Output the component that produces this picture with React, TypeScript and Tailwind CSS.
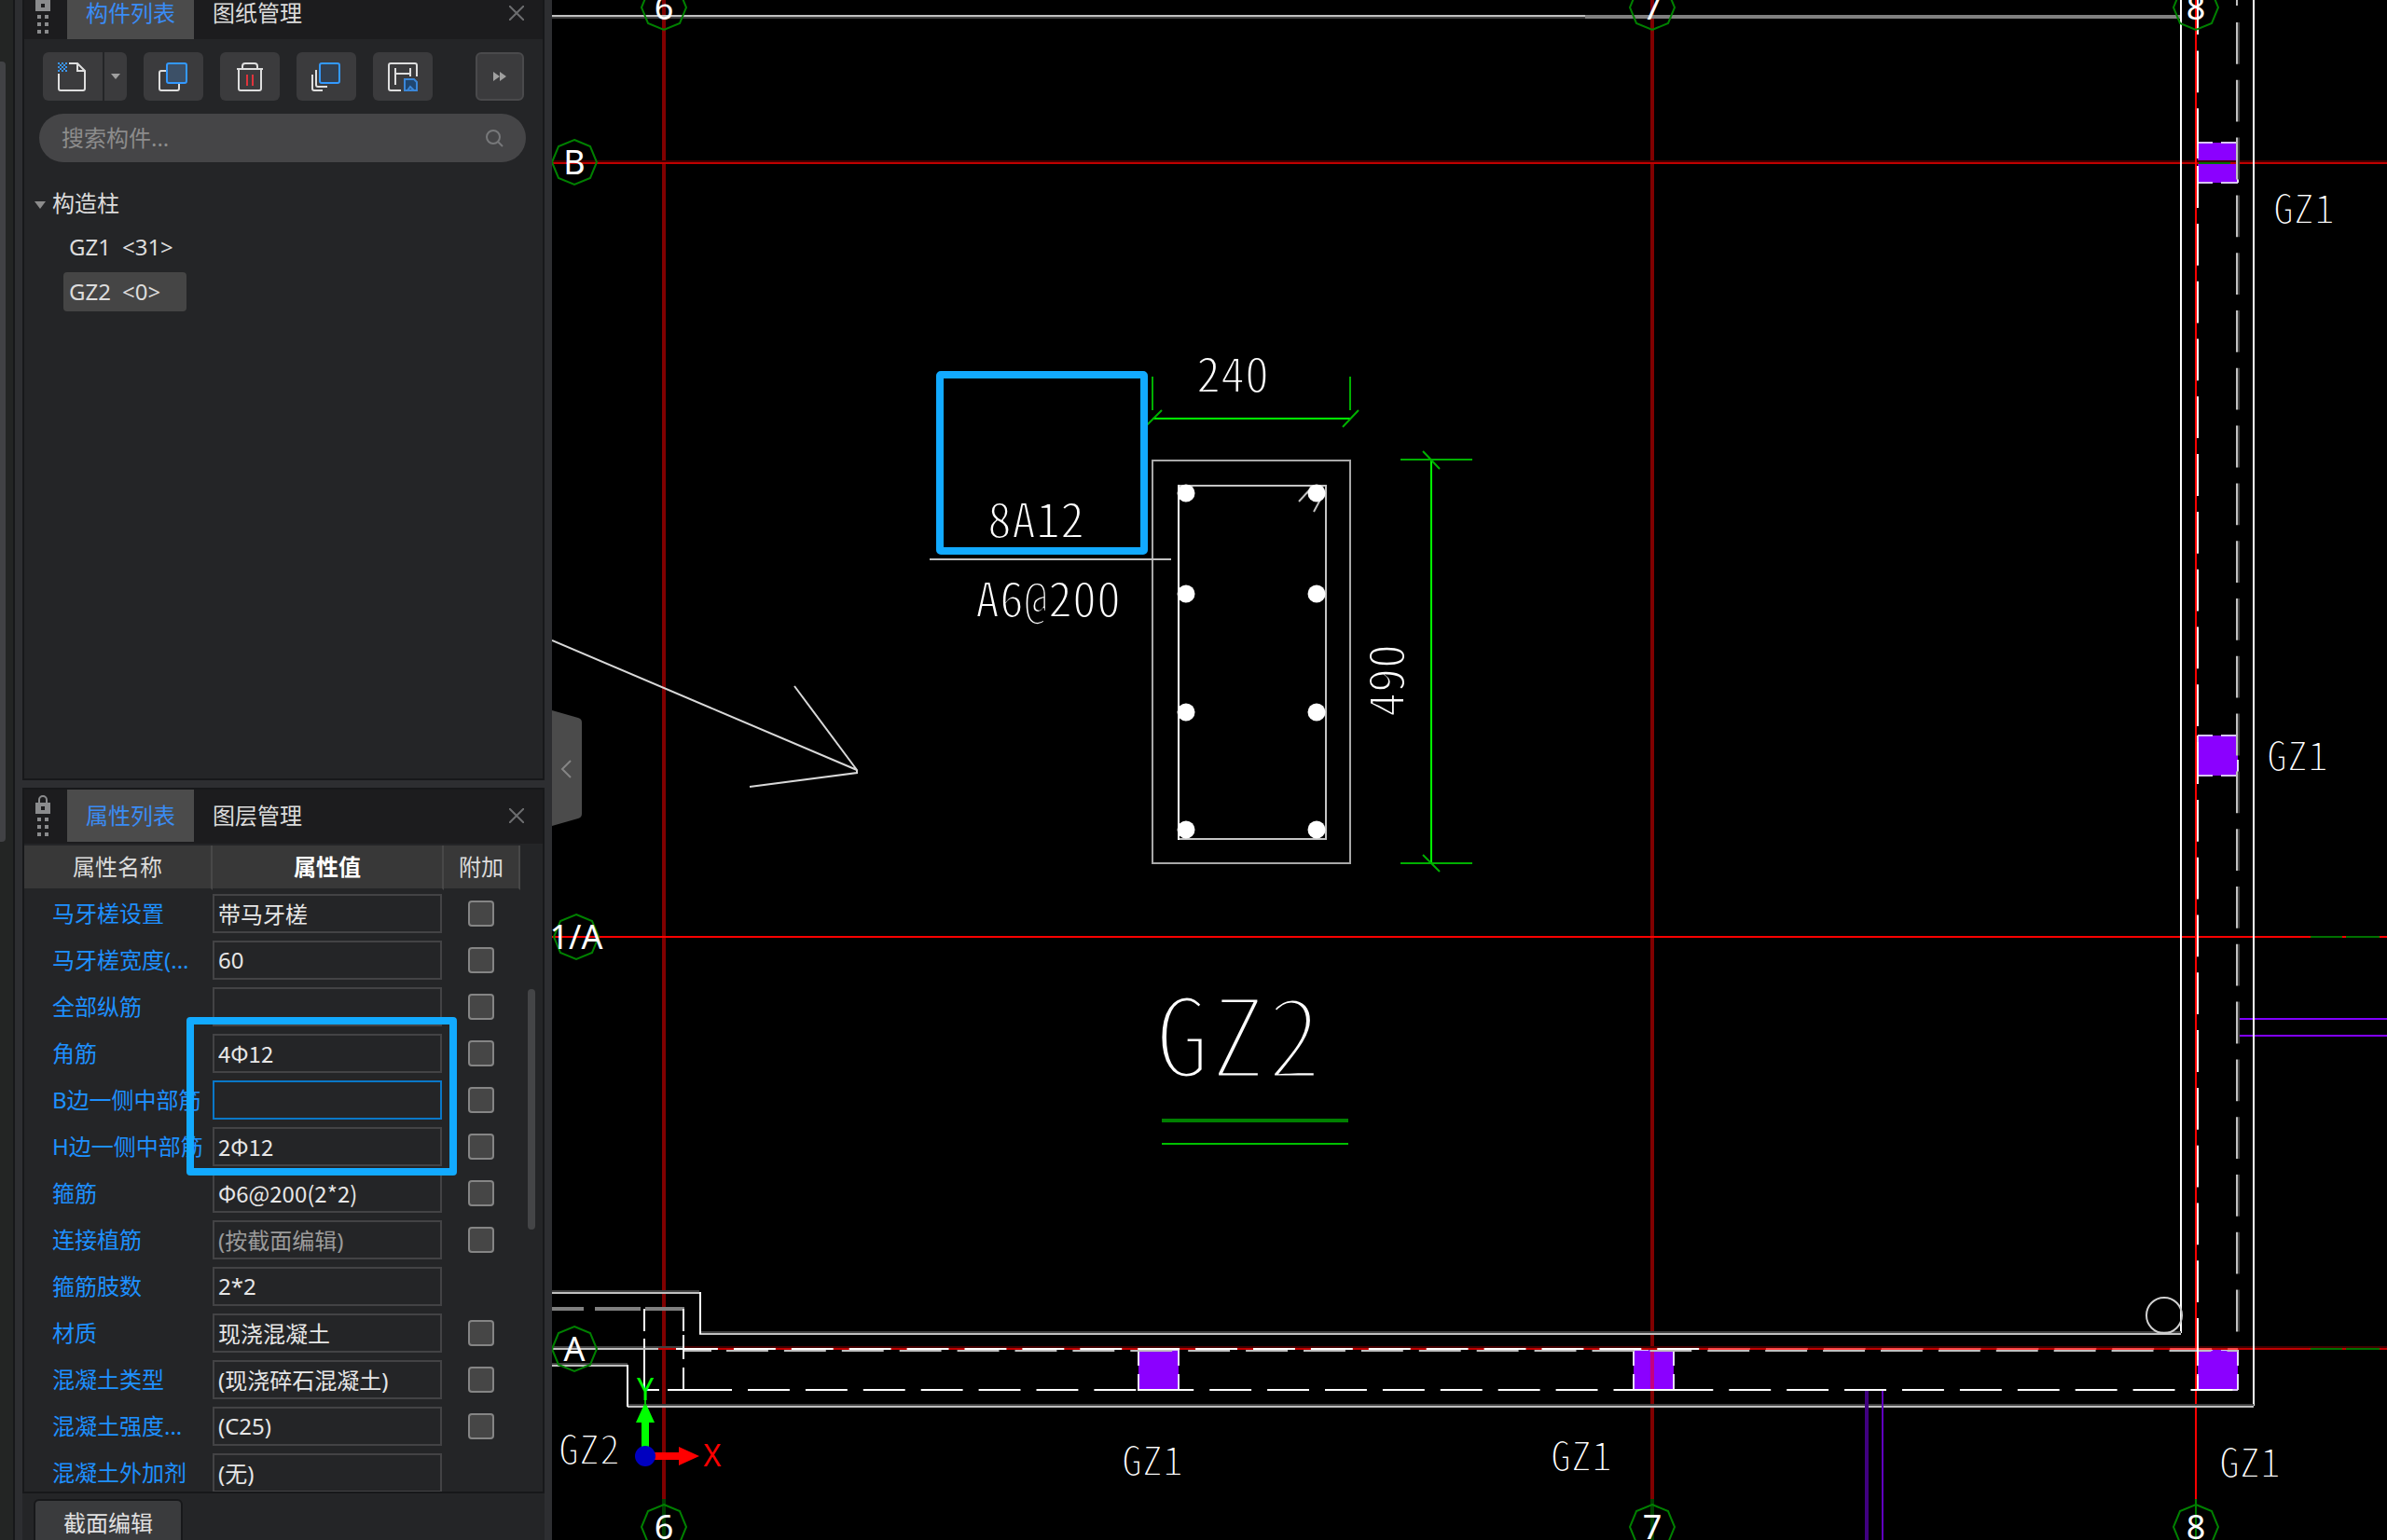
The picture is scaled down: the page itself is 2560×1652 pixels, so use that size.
import type { ReactNode } from "react";

type PropertyRow = {
  name: string;
  value: string;
  extra?: boolean;
  muted?: boolean;
  focused?: boolean;
};

const properties: PropertyRow[] = [
  { name: "马牙槎设置", value: "带马牙槎", extra: true },
  { name: "马牙槎宽度(...", value: "60", extra: true },
  { name: "全部纵筋", value: "", extra: true },
  { name: "角筋", value: "4Φ12", extra: true },
  { name: "B边一侧中部筋", value: "", extra: true, focused: true },
  { name: "H边一侧中部筋", value: "2Φ12", extra: true },
  { name: "箍筋", value: "Φ6@200(2*2)", extra: true },
  { name: "连接植筋", value: "(按截面编辑)", extra: true, muted: true },
  { name: "箍筋肢数", value: "2*2" },
  { name: "材质", value: "现浇混凝土", extra: true },
  { name: "混凝土类型", value: "(现浇碎石混凝土)", extra: true },
  { name: "混凝土强度...", value: "(C25)", extra: true },
  { name: "混凝土外加剂", value: "(无)" },
];

function GripIcon() {
  return (
    <svg className="ml-3 mt-1.5 h-11 w-4 shrink-0" viewBox="0 0 16 44" fill="#8a8b8d">
      <path d="M4 9V5a4 4 0 0 1 8 0v4" fill="none" stroke="#8a8b8d" strokeWidth="2" />
      <path fillRule="evenodd" d="M0 8h16v12H0zM6 12v4h4v-4z" />
      <path d="M2 24h4v4H2zM10 24h4v4h-4zM2 32h4v4H2zM10 32h4v4h-4zM2 40h4v4H2zM10 40h4v4h-4z" />
    </svg>
  );
}

function TabBar({ active, other }: { active: string; other: string }) {
  return (
    <div className="flex h-14 w-full shrink-0 items-start" role="tablist">
      <GripIcon />
      <button
        type="button"
        role="tab"
        aria-selected="true"
        className="ml-[18px] h-14 w-[136px] bg-[#4b4b4b] text-[#3a8cf5]"
      >
        {active}
      </button>
      <button type="button" role="tab" aria-selected="false" className="h-14 w-[136px] text-[#dcdcdc]">
        {other}
      </button>
      <button type="button" aria-label="关闭" className="ml-auto mr-3.5 flex h-14 w-7 items-center justify-center">
        <svg className="h-4 w-4" viewBox="0 0 16 16" stroke="#6c6d6f" strokeWidth="2">
          <path d="M0 0l16 16M16 0L0 16" />
        </svg>
      </button>
    </div>
  );
}

function ToolButton({ label, children }: { label: string; children: ReactNode }) {
  return (
    <button
      type="button"
      aria-label={label}
      className="flex h-[52px] w-16 items-center justify-center rounded-md bg-[#3b3b3d]"
    >
      <svg className="h-8 w-8" viewBox="0 0 32 32" fill="none" stroke="#dedede" strokeWidth="2">
        {children}
      </svg>
    </button>
  );
}

function ComponentPanel() {
  return (
    <section className="flex min-h-0 flex-[836] flex-col border-x-2 border-b-2 border-[#17181a] bg-[#242527]">
      <header className="flex h-[42px] shrink-0 items-end overflow-hidden bg-[#1c1c1e]">
        <TabBar active="构件列表" other="图纸管理" />
      </header>

      <div className="mt-3.5 flex shrink-0 items-center pl-5 pr-5">
        <div className="flex gap-[18px]">
          <div className="flex gap-0.5">
            <button
              type="button"
              aria-label="新建"
              className="flex h-[52px] w-16 items-center justify-center rounded-l-md bg-[#3b3b3d]"
            >
              <svg className="h-8 w-8" viewBox="0 0 32 32" fill="none" stroke="#dedede" strokeWidth="2">
                <path d="M12 2h9l8 8v19a2 2 0 0 1-2 2H3a2 2 0 0 1-2-2V13" />
                <path d="M21 2v8h8" />
                <path d="M0 2h10M0 6h10M0 10h10" stroke="#3a96f0" strokeDasharray="2 2" />
                <path d="M2 4h8M2 8h8" stroke="#3a96f0" strokeDasharray="2 2" />
              </svg>
            </button>
            <button
              type="button"
              aria-label="新建选项"
              className="flex h-[52px] w-6 items-center justify-center rounded-r-md bg-[#3b3b3d]"
            >
              <svg className="h-1.5 w-2.5" viewBox="0 0 10 6" fill="#a0a0a0">
                <path d="M0 0h10L5 6z" />
              </svg>
            </button>
          </div>
          <ToolButton label="复制">
            <rect x="1" y="10" width="21" height="21" rx="2" />
            <rect x="9" y="2" width="21" height="21" rx="2" fill="#3c5067" stroke="#3399ff" />
          </ToolButton>
          <ToolButton label="删除">
            <path d="M2 8h28M8 8V5a3 3 0 0 1 3-3h10a3 3 0 0 1 3 3v3M4 8v21a2 2 0 0 0 2 2h20a2 2 0 0 0 2-2V8" />
            <path d="M13 14v12M19 14v12" stroke="#e0343c" />
          </ToolButton>
          <ToolButton label="层间复制">
            <rect x="9" y="2" width="21" height="21" rx="2" fill="#333f4f" stroke="#3399ff" />
            <path d="M5 9v16a2 2 0 0 0 2 2h10M1 14v15a2 2 0 0 0 2 2h9" />
          </ToolButton>
          <ToolButton label="存档">
            <path d="M14 31H3a2 2 0 0 1-2-2V4a2 2 0 0 1 2-2h26a2 2 0 0 1 2 2v12" />
            <path d="M8 7v18M8 13h16M24 7v9" />
            <path d="M18 19h10l3 3v9H18z" stroke="#3a86d8" fill="#1f4670" />
            <path d="M21 31l3-4 4 4" stroke="#3a86d8" />
          </ToolButton>
        </div>
        <button
          type="button"
          aria-label="更多"
          className="ml-auto flex h-[52px] w-[52px] items-center justify-center rounded-md border-2 border-[#4a4a4c] bg-[#3b3b3d]"
        >
          <svg className="h-2.5 w-3.5" viewBox="0 0 14 10" fill="#a0a0a0">
            <path d="M0 0l7 5-7 5zM7 0l7 5-7 5z" />
          </svg>
        </button>
      </div>

      <label className="ml-4 mr-[18px] mt-3.5 flex h-[52px] shrink-0 items-center rounded-full bg-[#454547] pl-6 pr-6">
        <input
          type="text"
          aria-label="搜索构件"
          placeholder="搜索构件..."
          className="min-w-0 flex-1 bg-transparent placeholder-[#8c8c8c] outline-none"
        />
        <svg className="h-5 w-5" viewBox="0 0 20 20" fill="none" stroke="#77787a" strokeWidth="2">
          <circle cx="9" cy="9" r="7" />
          <path d="M14 14l5 5" />
        </svg>
      </label>

      <div className="mt-6 px-2.5 text-[#dcdcdc]">
        <button type="button" className="flex h-10 items-center gap-1.5">
          <svg className="mt-1 h-2 w-3.5" viewBox="0 0 14 8" fill="#8c8c8c">
            <path d="M1 0h12L7 8z" />
          </svg>
          构造柱
        </button>
        <ul className="mt-1.5 flex flex-col items-start gap-1.5 pl-8">
          <li className="flex h-[42px] w-[132px] items-center gap-3 rounded pl-1.5">
            <span>GZ1</span>
            <span>&lt;31&gt;</span>
          </li>
          <li className="flex h-[42px] w-[132px] items-center gap-3 rounded bg-[#454545] pl-1.5">
            <span>GZ2</span>
            <span>&lt;0&gt;</span>
          </li>
        </ul>
      </div>
    </section>
  );
}

function PropertyTable() {
  return (
    <table className="w-[532px] table-fixed border-separate border-spacing-0">
      <thead>
        <tr className="h-12 text-[#dcdcdc]">
          <th className="w-[202px] border-b-2 border-r-2 border-b-[#242527] border-r-[#484848] bg-[#383838] p-0 font-normal">
            属性名称
          </th>
          <th className="w-[248px] border-b-2 border-r-2 border-b-[#242527] border-r-[#484848] bg-[#383838] p-0 font-bold text-white">
            属性值
          </th>
          <th className="border-b-2 border-r-2 border-b-[#242527] border-r-[#484848] bg-[#383838] p-0 font-normal">
            附加
          </th>
        </tr>
      </thead>
      <tbody>
        {properties.map((row, i) => (
          <tr key={row.name} className="h-[50px]">
            <td className="whitespace-nowrap p-0 pl-[30px] text-[#1e90ff]">
              <label htmlFor={`prop-${i}`}>{row.name}</label>
            </td>
            <td className="p-0 pr-0.5">
              <input
                id={`prop-${i}`}
                type="text"
                defaultValue={row.value}
                className={`block h-[42px] w-full border-2 bg-transparent px-1 outline-none ${
                  row.focused ? "border-[#0a78c8]" : "border-[#434345]"
                } ${row.muted ? "text-[#9a9a9a]" : "text-[#e6e6e6]"} ${
                  row.value.includes("Φ") ? "font-['Noto_Sans_CJK_SC',sans-serif]" : ""
                }`}
              />
            </td>
            <td className="p-0 pr-0.5">
              {row.extra && (
                <input
                  type="checkbox"
                  aria-label={`${row.name} 附加`}
                  className="mx-auto block h-7 w-7 appearance-none rounded-sm border-2 border-[#858585] bg-[#464646]"
                />
              )}
            </td>
          </tr>
        ))}
      </tbody>
    </table>
  );
}

function PropertyPanel() {
  return (
    <section className="flex min-h-0 flex-[808] flex-col bg-[#242527]">
      <div className="relative flex min-h-0 flex-1 flex-col border-2 border-[#17181a]">
        <header className="h-[58px] shrink-0 bg-[#1c1c1e]">
          <TabBar active="属性列表" other="图层管理" />
        </header>
        <div className="mt-0.5 flex min-h-0 flex-1 overflow-hidden">
          <PropertyTable />
          <div className="ml-2 mt-[154px] h-[258px] w-2 rounded-sm bg-[#444547]" />
        </div>
        {/* callout round the corner and side bars */}
        <div className="pointer-events-none absolute left-[174px] top-[244px] h-[170px] w-[290px] rounded border-8 border-[#12aaff]" />
      </div>
      <footer className="h-[50px] shrink-0 overflow-hidden pl-3 pt-1.5">
        <button
          type="button"
          className="h-14 w-40 rounded-md border-2 border-[#17181a] bg-[#3a3b3d] pb-1 text-[#e0e0e0]"
        >
          截面编辑
        </button>
      </footer>
    </section>
  );
}

const H = 24;
const D = 17;

function Bubble({ x, y, label }: { x: number; y: number; label: string }) {
  const points = [
    [0, -H],
    [D, -D],
    [H, 0],
    [D, D],
    [0, H],
    [-D, D],
    [-H, 0],
    [-D, -D],
  ]
    .map(([dx, dy]) => `${x + dx},${y + dy}`)
    .join(" ");
  return (
    <g>
      <polygon points={points} fill="none" stroke="#008000" strokeWidth="2" />
      <text x={x} y={y + 13} textAnchor="middle" fill="#fff" className="text-[36px]">
        {label}
      </text>
    </g>
  );
}

type Note = { x: number; y: number; label: string };

const columnTags: Note[] = [
  { x: 2471, y: 240, label: "GZ1" },
  { x: 2464, y: 827, label: "GZ1" },
  { x: 2413, y: 1585, label: "GZ1" },
  { x: 1236, y: 1583, label: "GZ1" },
  { x: 1696, y: 1578, label: "GZ1" },
  { x: 632, y: 1571, label: "GZ2" },
];

const barTags: Note[] = [
  { x: 1322, y: 421, label: "240" },
  { x: 1111, y: 577, label: "8A12" },
  { x: 1124, y: 662, label: "A6@200" },
];

const columns = [
  { x: 2357, y: 153 },
  { x: 2357, y: 789 },
  { x: 2357, y: 1448 },
  { x: 1221, y: 1448 },
  { x: 1752, y: 1448 },
];

const rebars = [529, 637, 764, 890];

function Drawing() {
  return (
    <svg
      className="block h-full w-full font-['Noto_Sans',sans-serif]"
      viewBox="592 0 1968 1652"
      preserveAspectRatio="xMinYMin slice"
      fill="none"
      strokeWidth="2"
    >
      {/* columns */}
      {columns.map((c) => (
        <g key={`${c.x}-${c.y}`}>
          <rect x={c.x} y={c.y} width="43" height="43" fill="#8b00ff" />
          <path
            d={`M${c.x} ${c.y}h16m9 0h18M${c.x} ${c.y + 43}h16m9 0h18`}
            stroke="#d8c4f0"
          />
          <path
            d={`M${c.x} ${c.y}v17m0 9v17M${c.x + 43} ${c.y}v17m0 9v17`}
            stroke="#e8dcf8"
          />
        </g>
      ))}

      {/* axis grid */}
      <path d="M712 0V1608M1772 0V1448M1772 1491V1608" stroke="#800000" strokeWidth="4" />
      <path d="M1772 1448V1491" stroke="#c50080" strokeWidth="4" />
      <path d="M712 1608V1652M1772 1608V1652" stroke="#004000" strokeWidth="4" />
      <path d="M592 173H2560M733 1445H2560" stroke="#400000" />
      <path d="M592 175H2560M700 1447H2560" stroke="#c00000" />
      <path d="M592 1005H2560M2355 0V1608" stroke="#ff0000" />
      <path d="M2355 1608V1652" stroke="#008000" />
      <path d="M2478 1005h34m4 0h36M2478 1447h34m4 0h36M2358 175h34" stroke="#007000" />

      {/* walls */}
      <path d="M592 17H1700" stroke="#c0c0c0" />
      <path d="M592 19H1700" stroke="#404040" />
      <path d="M1700 18H2339" stroke="#808080" strokeWidth="4" />
      <path d="M2339 0V1430M2417 0V1508" stroke="#fff" />
      <path d="M592 1387H750M750 1431H2339M592 1465H673M673 1509H2417" stroke="#c0c0c0" />
      <path d="M592 1385H750M750 1429H2339M592 1463H673M673 1507H2417M592 1445H733" stroke="#404040" />
      <path d="M751 1386V1431M673 1464V1509" stroke="#fff" />
      <path d="M592 1404h34m12 0h49m5 0h42" stroke="#808080" strokeWidth="4" />
      <path d="M691 1404v24m0 8v55M733 1404v24m0 4v26m0 9v24" stroke="#fff" />
      <path d="M592 1447H706" stroke="#c0c0c0" />
      <path d="M725 1447H1824" stroke="#fff" strokeDasharray="44.9 17" />
      <path d="M1832 1447H2400" stroke="#ff4444" strokeDasharray="44.9 17" />
      <path d="M734 1449h29" stroke="#c0c0c0" />
      <path d="M779 1449H2400" stroke="#c0c0c0" strokeDasharray="44.9 17" />
      <path d="M691 1491h16m9 0h69" stroke="#fff" />
      <path d="M802 1491H2400" stroke="#fff" strokeDasharray="44.9 17" />
      <path d="M1220 1491h44M1751 1491h84" stroke="#fff" />
      <path d="M2357 0V37M2357 54.5V1491" stroke="#fff" strokeDasharray="44.8 17" />
      <path d="M2399 24V1430" stroke="#c0c0c0" strokeDasharray="44.8 17" />
      <path d="M2401 24V1430" stroke="#404040" strokeDasharray="44.8 17" />
      <path d="M2399 0v6" stroke="#c0c0c0" />
      <circle cx="2321" cy="1411" r="19" stroke="#d0d0d0" />

      {/* beams */}
      <path d="M2402 1093H2416M2418 1093H2560M2402 1111H2416M2418 1111H2560" stroke="#8000ff" />
      <path d="M2002 1492V1652" stroke="#400080" strokeWidth="4" />
      <path d="M2019 1492V1652" stroke="#6000c0" />

      {/* flow arrow */}
      <path d="M592 687L919 826M852 736L919 826V829L804 844" stroke="#d8d8d8" />

      {/* section detail */}
      <path d="M1236 494H1448V926H1236Z" stroke="#a8a8a8" />
      <path d="M1264 521H1422V900H1264Z" stroke="#c4c4c4" />
      <path d="M1264 520V901" stroke="#fff" />
      <path d="M1393 538L1404 526M1409 549L1417 534M997 600H1256" stroke="#c0c0c0" />
      {rebars.map((y) => (
        <g key={y} fill="#fff">
          <circle cx="1272" cy={y} r="9.5" />
          <circle cx="1412" cy={y} r="9.5" />
        </g>
      ))}
      <path d="M1236 449H1448M1535 494V926" stroke="#00ff00" />
      <path
        d="M1236 404V440M1448 404V440M1230 456l16-16M1440 458l17-18M1502 493H1579M1502 926H1579M1526 484l18 19M1526 917l18 18"
        stroke="#00b000"
      />
      <path d="M1246 1202H1446" stroke="#008000" strokeWidth="4" />
      <path d="M1246 1227H1446" stroke="#00c000" />

      {/* the background-coloured outline thins the strokes to a pen line */}
      <g
        fill="#ffffff"
        stroke="#000000"
        textAnchor="middle"
        className="font-['Noto_Sans_Mono_CJK_SC','Noto_Sans_CJK_SC',monospace]"
      >
        {columnTags.map((t) => (
          <text key={`${t.x}-${t.y}`} x={t.x} y={t.y} strokeWidth="2" className="text-[44px]">
            {t.label}
          </text>
        ))}
        {barTags.map((t) => (
          <text key={t.label} x={t.x} y={t.y} strokeWidth="2" className="text-[52px]">
            {t.label}
          </text>
        ))}
        <text transform="translate(1506 730) rotate(-90)" strokeWidth="2" className="text-[52px]">
          490
        </text>
        <text x="1328" y="1157" strokeWidth="7" className="text-[120px]">
          GZ2
        </text>
      </g>

      {/* axis bubbles */}
      <Bubble x={712} y={8} label="6" />
      <Bubble x={1772} y={8} label="7" />
      <Bubble x={2355} y={8} label="8" />
      <Bubble x={616} y={174} label="B" />
      <Bubble x={618} y={1005} label="1/A" />
      <Bubble x={616} y={1447} label="A" />
      <Bubble x={712} y={1638} label="6" />
      <Bubble x={1772} y={1638} label="7" />
      <Bubble x={2355} y={1638} label="8" />

      {/* coordinate origin */}
      <path d="M692 1504l10 22h-6v28h-8v-28h-6z" fill="#00ff00" />
      <path d="M692 1500v8" stroke="#00c000" />
      <path d="M700 1558h28v-6l22 10-22 10v-6h-28z" fill="#ff0000" />
      <circle cx="692" cy="1562" r="11" fill="#0000c0" />
      <text x="692" y="1502" textAnchor="middle" fill="#00ff00" className="text-[32px]">
        Y
      </text>
      <text x="764" y="1573" textAnchor="middle" fill="#ff0000" className="text-[32px]">
        X
      </text>

      {/* callout round the bar note */}
      <rect x="1008" y="402" width="219" height="189" rx="1" stroke="#12aaff" strokeWidth="8" />
    </svg>
  );
}

export default function App() {
  return (
    <div className="flex h-screen overflow-hidden bg-[#2d2e31] font-['Noto_Sans','Noto_Sans_CJK_SC',sans-serif] text-[24px] leading-8">
      <div className="w-4 shrink-0 border-r-2 border-[#17181a] bg-[#232524] pt-[66px]">
        <div className="h-[837px] w-1.5 rounded-r-sm bg-[#414245]" />
      </div>
      <aside className="flex w-[576px] shrink-0 flex-col gap-2 px-2">
        <ComponentPanel />
        <PropertyPanel />
      </aside>
      <main className="relative min-w-0 flex-1 bg-black">
        <Drawing />
        <button type="button" aria-label="收起" className="absolute left-0 top-[762px] h-[124px] w-8">
          <svg className="h-full w-full" viewBox="0 0 32 124">
            <path d="M0 0l28 8q4 1 4 5v98q0 4-4 5L0 124z" fill="#4b4b4b" />
            <path d="M20 54l-9 9 9 9" fill="none" stroke="#858585" strokeWidth="2" />
          </svg>
        </button>
      </main>
    </div>
  );
}
